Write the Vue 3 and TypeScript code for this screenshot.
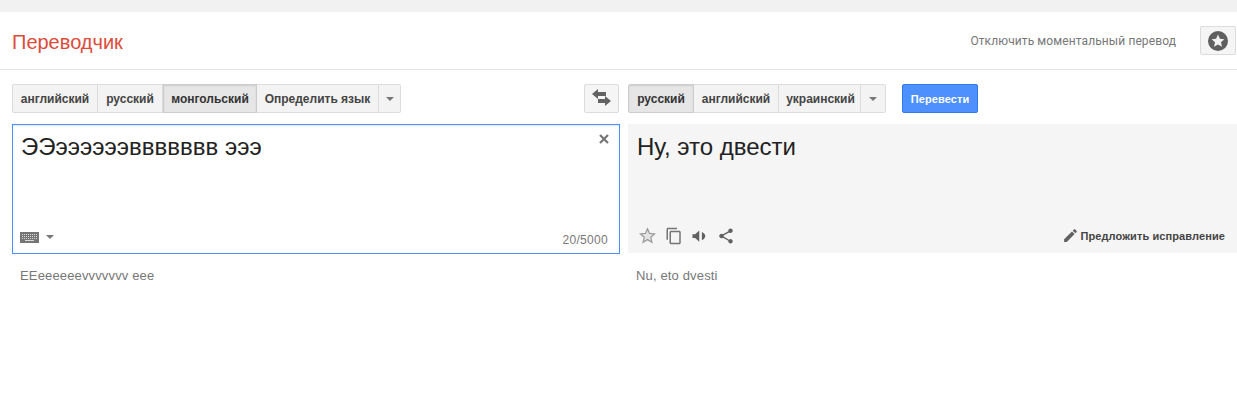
<script setup lang="ts">
const sourceLangs = [
  { label: 'английский', w: 86 },
  { label: 'русский', w: 65 },
  { label: 'монгольский', w: 94, active: true },
  { label: 'Определить язык', w: 122 },
]
const targetLangs = [
  { label: 'русский', w: 66, active: true },
  { label: 'английский', w: 85 },
  { label: 'украинский', w: 82 },
]
</script>

<template>
  <div class="page">
    <div class="topbar"></div>
    <header class="header">
      <div class="logo">Переводчик</div>
      <div class="header-right">
        <span class="instant">Отключить моментальный перевод</span>
        <button class="star-btn" aria-label="star">
          <svg width="20" height="20" viewBox="0 0 20 20">
            <circle cx="10" cy="10" r="10" fill="#5f5f5f" />
            <path d="M10 3.6l1.9 4.2 4.5.5-3.4 3 1 4.5-4-2.3-4 2.3 1-4.5-3.4-3 4.5-.5z" fill="#f1f1f1" />
          </svg>
        </button>
      </div>
    </header>

    <div class="toolbar">
      <div class="side left-side">
        <div class="group">
          <button v-for="l in sourceLangs" :key="l.label" class="seg" :class="{ active: l.active }" :style="{ width: l.w + 'px' }">{{ l.label }}</button>
          <button class="seg arrow-seg" :style="{ width: '22px' }"><span class="caret"></span></button>
        </div>
        <button class="swap" aria-label="swap">
          <svg width="20" height="17" viewBox="0 0 20 17">
            <path d="M6 0L0 5l6 5V7h8V3H6z" fill="#636363" />
            <path d="M13 7v3H6v4h7v3l6-5z" fill="#636363" />
          </svg>
        </button>
      </div>
      <div class="side right-side">
        <div class="group">
          <button v-for="l in targetLangs" :key="l.label" class="seg" :class="{ active: l.active }" :style="{ width: l.w + 'px' }">{{ l.label }}</button>
          <button class="seg arrow-seg" :style="{ width: '25px' }"><span class="caret"></span></button>
        </div>
        <button class="translate">Перевести</button>
      </div>
    </div>

    <div class="panels">
      <div class="col col-left">
        <div class="box source">
          <div class="box-text src-text">ЭЭээээээввввввв эээ</div>
          <svg class="clear" width="10" height="10" viewBox="0 0 10 10">
            <path d="M1 1l8 8M9 1l-8 8" stroke="#757575" stroke-width="2.2" fill="none" />
          </svg>
          <div class="box-foot">
            <div class="kbd">
              <svg width="19" height="11" viewBox="0 0 19 11">
                <rect width="19" height="11" fill="#757575" />
                <path d="M2 2.5h15M2 4.5h15M2 6.5h15" stroke="#d8d8d8" stroke-width="1" stroke-dasharray="1 1" />
                <path d="M5 8.5h9" stroke="#d8d8d8" stroke-width="1" />
              </svg>
              <span class="caret small"></span>
            </div>
            <span class="count">20/5000</span>
          </div>
        </div>
        <div class="translit">EEeeeeeevvvvvvv eee</div>
      </div>
      <div class="col col-right">
        <div class="box target">
          <div class="box-text tgt-text">Ну, это двести</div>
          <div class="box-foot tgt-foot">
            <div class="icons">
              <svg class="i-star" width="17" height="17" viewBox="0 0 24 24">
                <path d="M12 2.500l2.900 6.600 7.100.7-5.400 4.700 1.600 7-6.200-3.700-6.200 3.700 1.600-7L2 9.800l7.100-.7z" fill="#e4e4e4" stroke="#9a9a9a" stroke-width="1.800" />
              </svg>
              <svg class="i-copy" width="18" height="18" viewBox="0 0 24 24">
                <path d="M16 1H4C2.900 1 2 1.900 2 3v14h2V3h12V1zm3 4H8C6.900 5 6 5.900 6 7v14c0 1.100.9 2 2 2h11c1.100 0 2-.9 2-2V7c0-1.100-.9-2-2-2zm0 16H8V7h11v14z" fill="#757575" />
              </svg>
              <svg class="i-vol" width="18" height="18" viewBox="0 0 24 24">
                <path d="M2 9.500v5h3.500l5.500 5V4.500L5.500 9.500H2z" fill="#616161" />
                <path d="M14.500 6.500c2.500 1 4.500 3 4.500 5.500s-2 4.500-4.500 5.500z" fill="#616161" />
              </svg>
              <svg class="i-share" width="18" height="18" viewBox="0 0 24 24">
                <path d="M18 16.100c-.8 0-1.500.3-2 .8L8.900 12.700c.1-.2.100-.5.100-.7s0-.5-.1-.7L16 7.200c.5.500 1.200.8 2 .8 1.700 0 3-1.300 3-3s-1.300-3-3-3-3 1.300-3 3c0 .2 0 .5.100.7L8 9.800C7.500 9.300 6.800 9 6 9c-1.700 0-3 1.300-3 3s1.300 3 3 3c.8 0 1.500-.3 2-.8l7.100 4.200c-.1.200-.1.400-.1.600 0 1.600 1.300 2.900 3 2.900s3-1.300 3-2.900-1.300-2.900-3-2.900z" fill="#616161" />
              </svg>
            </div>
            <div class="suggest">
              <svg width="17" height="17" viewBox="0 0 24 24">
                <path d="M3 17.250V21h3.750L17.800 9.940l-3.750-3.750L3 17.250zM20.700 7.040c.4-.4.400-1 0-1.400l-2.340-2.340c-.4-.4-1-.4-1.400 0l-1.830 1.830 3.750 3.750 1.820-1.840z" fill="#616161" />
              </svg>
              <span>Предложить исправление</span>
            </div>
          </div>
        </div>
        <div class="translit tgt-translit">Nu, eto dvesti</div>
      </div>
    </div>
  </div>
</template>

<style>
html, body { margin: 0; background: #fff; }
</style>

<style scoped>
.page {
  width: 1237px;
  height: 408px;
  overflow: hidden;
  background: #fff;
  font-family: "Liberation Sans", Arial, sans-serif;
  color: #222;
}
button { font-family: inherit; margin: 0; cursor: default; box-sizing: border-box; }
.topbar { height: 12px; background: #f1f1f1; }
.header {
  height: 57px;
  border-bottom: 1px solid #e5e5e5;
  display: flex;
  align-items: center;
  justify-content: space-between;
  padding: 0 1px 0 12px;
}
.logo { font-size: 20px; color: #dd4b39; line-height: 24px; position: relative; top: 1px; }
.header-right { display: flex; align-items: center; gap: 24px; }
.instant { font-family: Roboto, sans-serif; font-size: 12px; color: #777; letter-spacing: 0.1px; }
.star-btn {
  width: 36px;
  height: 29px;
  display: flex;
  align-items: center;
  justify-content: center;
  background: #f5f5f5;
  border: 1px solid #dcdcdc;
  border-radius: 2px;
  padding: 0;
}
.toolbar { display: flex; padding-top: 14px; height: 29px; }
.side { display: flex; }
.left-side { width: 607px; margin-left: 12px; justify-content: space-between; }
.right-side { margin-left: 9px; gap: 16px; }
.right-side .seg:nth-child(3) { padding-left: 2px; }
.group { display: flex; height: 29px; }
.seg {
  height: 29px;
  padding: 0;
  background: #f3f3f3;
  border: 1px solid #dcdcdc;
  border-left: 0;
  font-size: 12px;
  font-weight: 700;
  color: #444;
  display: flex;
  align-items: center;
  justify-content: center;
}
.seg:first-child { border-left: 1px solid #dcdcdc; border-radius: 2px 0 0 2px; }
.seg:last-child { border-radius: 0 2px 2px 0; }
.seg.active {
  background: #e6e6e6;
  border-color: #ccc;
  border-left: 1px solid #ccc;
  box-shadow: inset 0 1px 2px rgba(0, 0, 0, 0.1);
  color: #333;
}
.caret {
  display: block;
  width: 0;
  height: 0;
  border-left: 4px solid transparent;
  border-right: 4px solid transparent;
  border-top: 4px solid #777;
}
.caret.small { margin-left: 7px; }
.swap {
  width: 35px;
  height: 29px;
  padding: 0 0 2px 0;
  background: #f5f5f5;
  border: 1px solid #dcdcdc;
  border-radius: 2px;
  display: flex;
  align-items: center;
  justify-content: center;
}
.translate {
  width: 76px;
  height: 29px;
  padding: 0;
  background: #4d90fe;
  border: 1px solid #3079ed;
  border-radius: 2px;
  color: #fff;
  font-size: 11px;
  font-weight: 700;
  letter-spacing: 0.1px;
}
.panels { display: flex; gap: 8px; padding: 11px 0 0 12px; }
.col-left { width: 608px; }
.col-right { width: 609px; }
.box { position: relative; box-sizing: border-box; display: flex; flex-direction: column; justify-content: space-between; }
.source { height: 130px; border: 1px solid #4d90fe; padding: 7px 7px 0; box-shadow: inset 0 1px 2px rgba(0, 0, 0, 0.1); }
.src-text { padding-left: 1px; }
.target { height: 129px; background: #f5f5f5; padding: 8px 12px 0 9px; }
.box-text { font-size: 24px; line-height: 30px; color: #222; }
.clear { position: absolute; top: 9px; right: 10px; }
.box-foot { display: flex; align-items: center; justify-content: space-between; height: 30px; }
.kbd { display: flex; align-items: center; margin-bottom: 2px; }
.count { font-size: 12px; color: #777; letter-spacing: 0.3px; margin: 0 4px 0 0; position: relative; top: 2px; }
.tgt-foot { height: 33px; padding-bottom: 2px; box-sizing: border-box; }
.icons { display: flex; align-items: center; gap: 8px; margin-left: 2px; }
.i-star { margin-right: 1px; }
.suggest {
  display: flex;
  align-items: center;
  gap: 1px;
  font-size: 11px;
  font-weight: 700;
  color: #444;
  letter-spacing: 0.1px;
}
.translit { font-size: 13px; color: #777; padding: 14px 0 0 8px; line-height: 15px; letter-spacing: 0.15px; }
.tgt-translit { padding: 15px 0 0 8px; }
</style>
